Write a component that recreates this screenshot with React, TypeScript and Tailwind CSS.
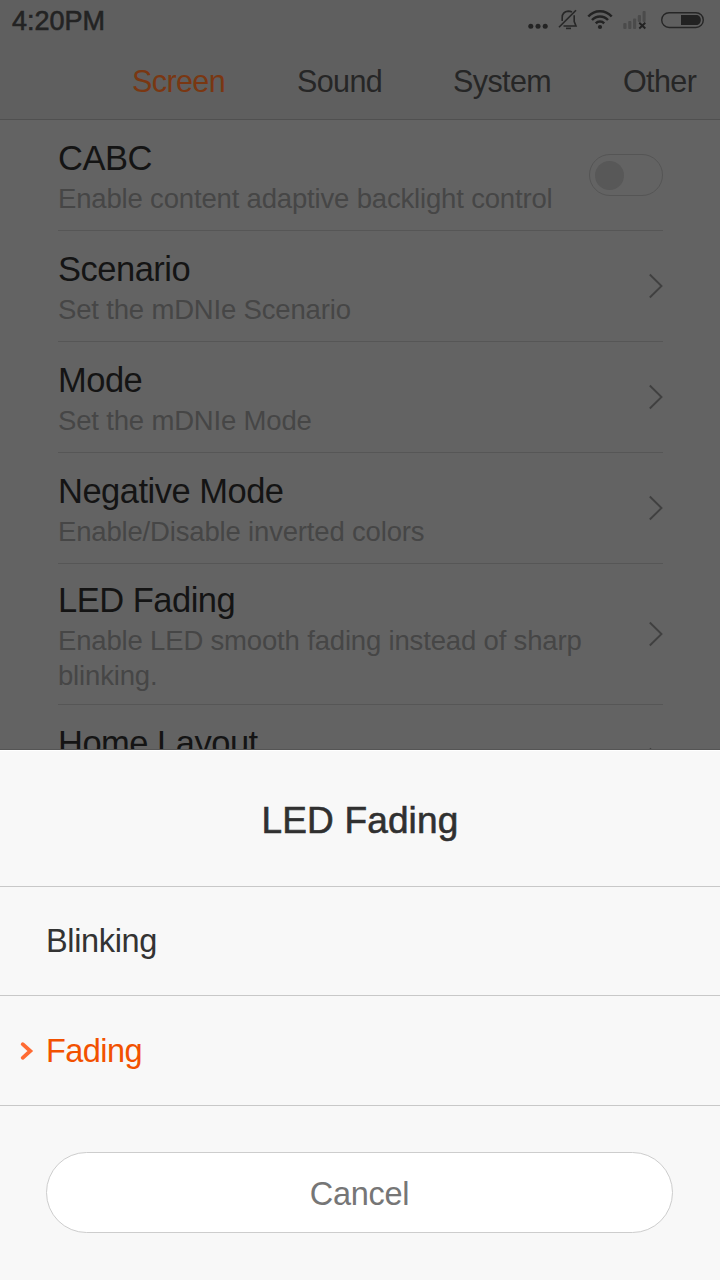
import React from "react";

const tabs = [
  { label: "Screen", cls: "ml-[132px] w-[165px] text-[#7a3712]" },
  { label: "Sound", cls: "w-[156px] text-[#262626]" },
  { label: "System", cls: "w-[170px] text-[#262626]" },
  { label: "Other", cls: "text-[#262626]" },
];

type Item = {
  title: string;
  lines: string[];
  control: "switch" | "arrow";
  height: string;
  pad: string;
};

const items: Item[] = [
  { title: "CABC", lines: ["Enable content adaptive backlight control"], control: "switch", height: "h-[111px]", pad: "pt-[19px]" },
  { title: "Scenario", lines: ["Set the mDNIe Scenario"], control: "arrow", height: "h-[111px]", pad: "pt-[19px]" },
  { title: "Mode", lines: ["Set the mDNIe Mode"], control: "arrow", height: "h-[111px]", pad: "pt-[19px]" },
  { title: "Negative Mode", lines: ["Enable/Disable inverted colors"], control: "arrow", height: "h-[111px]", pad: "pt-[19px]" },
  { title: "LED Fading", lines: ["Enable LED smooth fading instead of sharp", "blinking."], control: "arrow", height: "h-[141px]", pad: "pt-[17px]" },
  { title: "Home Layout", lines: [], control: "arrow", height: "h-[111px]", pad: "pt-[19px]" },
];

function StatusIcons() {
  return (
    <svg width="210" height="40" viewBox="510 0 210 40" fill="none" className="shrink-0">
      <g fill="#232323">
        <circle cx="530.8" cy="26.3" r="2.5" />
        <circle cx="538" cy="26.3" r="2.5" />
        <circle cx="545.2" cy="26.3" r="2.5" />
      </g>
      <g stroke="#272727" strokeWidth="1.6">
        <path d="M559 27.2 576 10.3" />
        <path d="M562.2 21V17.5C562.2 13.5 564.5 11.5 568.2 11.1C569.8 11.1 571 11.5 572 12" />
        <path d="M574.2 15.2V21.5L576 26H563.5" />
        <path d="M566 28.4H571" />
      </g>
      <g stroke="#232323" strokeWidth="2.5">
        <path d="M588.3 16.5C594.7 9.6 605.3 9.6 611.7 16.5" />
        <path d="M592 20C596.4 15.3 603.6 15.3 608 20" />
        <path d="M595.8 23.4C598.1 21 601.9 21 604.2 23.4" />
      </g>
      <circle cx="600" cy="27" r="2.1" fill="#232323" />
      <g fill="#4b4b4b">
        <rect x="623.3" y="23" width="3.2" height="6" rx="1" />
        <rect x="628.2" y="21" width="3.2" height="8" rx="1" />
        <rect x="633" y="18.5" width="3.2" height="10.5" rx="1" />
        <rect x="637.8" y="15" width="3.2" height="7" rx="1" />
        <rect x="642.6" y="11" width="3" height="11" rx="1" />
      </g>
      <path d="M639.3 22.7 645.3 28.5M645.3 22.7 639.3 28.5" stroke="#222" strokeWidth="1.9" />
      <rect x="661.7" y="12.7" width="41.6" height="14.8" rx="7.4" stroke="#262626" strokeWidth="1.4" />
      <path d="M681 15H696.5C699 15 700.8 17.2 700.8 20C700.8 22.8 699 25 696.5 25H681Z" fill="#222" />
    </svg>
  );
}

function Row({ item }: { item: Item }) {
  return (
    <li className={`ml-[58px] flex w-[605px] shrink-0 items-center justify-between border-b border-[#565656] ${item.height}`}>
      <div className={`h-full whitespace-nowrap ${item.pad}`}>
        <div className="text-[34.5px] leading-[39px] tracking-[-0.5px] text-[#141414]">{item.title}</div>
        <div className="mt-[3px] text-[27.5px] leading-[35px] tracking-[-0.17px] text-[#464646]">
          {item.lines.map((line) => (
            <div key={line}>{line}</div>
          ))}
        </div>
      </div>
      {item.control === "switch" ? (
        <div className="flex h-[42px] w-[74px] shrink-0 items-center rounded-full border border-[#555] pl-[5px]">
          <div className="size-[29px] rounded-full bg-[#585858]" />
        </div>
      ) : (
        <svg width="14" height="26" viewBox="0 0 14 26" fill="none" className="shrink-0">
          <path d="M0.8 1.5 12.5 13 0.8 24.5" stroke="#404040" strokeWidth="1.9" />
        </svg>
      )}
    </li>
  );
}

export default function App() {
  return (
    <div className="flex h-[1280px] w-[720px] flex-col overflow-hidden bg-[#636363] font-['Liberation_Sans',Arial,sans-serif]">
      <div className="flex h-[750px] shrink-0 flex-col overflow-hidden border-b border-[#555]">
        <header className="h-[120px] shrink-0 border-b border-[#505050] bg-[#5f5f5f]">
          <div className="flex h-[40px] justify-between">
            <span className="pl-[12px] text-[27px] leading-[43px] text-[#232323] [-webkit-text-stroke:0.6px_#232323]">4:20PM</span>
            <StatusIcons />
          </div>
          <nav className="flex h-[79px] text-[30.5px] leading-[82px] tracking-[-0.6px]">
            {tabs.map((tab) => (
              <div key={tab.label} className={`shrink-0 ${tab.cls}`}>{tab.label}</div>
            ))}
          </nav>
        </header>
        <ul className="flex flex-col">
          {items.map((item) => (
            <Row key={item.title} item={item} />
          ))}
        </ul>
      </div>
      <section className="flex h-[530px] shrink-0 flex-col border-t border-white bg-[#f8f8f8]">
        <h2 className="h-[136px] shrink-0 border-b border-[#c8c8c8] text-center text-[37px] leading-[139px] tracking-[0.15px] text-[#303030] [-webkit-text-stroke:0.6px_#303030]">LED Fading</h2>
        <div className="h-[109px] shrink-0 border-b border-[#c8c8c8] pl-[46px] text-[32.5px] leading-[109px] tracking-[-0.35px] text-[#333]">Blinking</div>
        <div className="flex h-[110px] shrink-0 items-center border-b border-[#c8c8c8] pl-[20px] text-[32.5px] leading-[109px] tracking-[-0.55px] text-[#f25100]">
          <svg width="14" height="20" viewBox="0 0 14 20" fill="none" className="mr-[12px]">
            <path d="M2.7 3.2 10.3 10 2.7 16.8" stroke="#ff6b33" strokeWidth="3.8" strokeLinecap="round" />
          </svg>
          <span className="pt-px">Fading</span>
        </div>
        <button className="mt-[46px] ml-[46px] h-[81px] w-[627px] rounded-full border border-[#cdcdcd] bg-white text-center text-[32.5px] leading-[83px] tracking-[-0.3px] text-[#767676]">Cancel</button>
      </section>
    </div>
  );
}
